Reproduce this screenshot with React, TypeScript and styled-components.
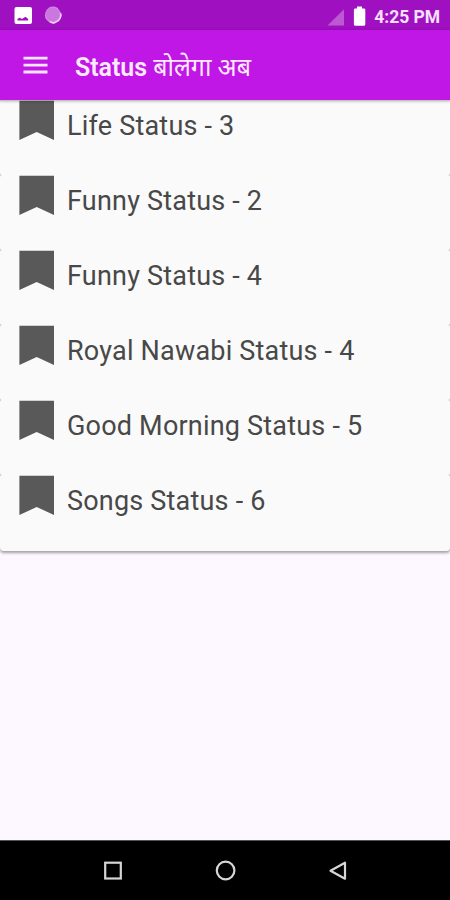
import React from 'react';
import styled, { createGlobalStyle } from 'styled-components';

const GlobalStyle = createGlobalStyle`
  html, body { margin: 0; padding: 0; }
  body { font-family: Roboto, 'Noto Sans', sans-serif; overflow: hidden; }
`;

const Screen = styled.div`
  width: 450px;
  height: 900px;
  display: flex;
  flex-direction: column;
  overflow: hidden;
  background: #fdf7ff;
`;

const StatusBar = styled.div`
  flex: none;
  height: 30px;
  box-sizing: border-box;
  padding: 1px 10px 0 14px;
  display: flex;
  align-items: center;
  justify-content: space-between;
  background: #9f10c0;
`;

const StatusIcons = styled.div`
  display: flex;
  align-items: center;
`;

const NoticeIcon = styled.svg`
  display: block;
  margin-right: 11px;
`;

const Clock = styled.span`
  margin-left: 8px;
  font-size: 17.5px;
  line-height: 30px;
  font-weight: 700;
  letter-spacing: -0.05px;
  color: #f9e0ff;
  padding-top: 2px;
`;

const Toolbar = styled.header`
  flex: none;
  height: 70px;
  box-sizing: border-box;
  padding-left: 23px;
  display: flex;
  align-items: center;
  background: #c016e6;
  box-shadow: 0 1px 3px rgba(0, 0, 0, 0.35);
  z-index: 1;
`;

const MenuButton = styled.button`
  width: 25px;
  height: 18px;
  margin: 0 27px 0 0;
  padding: 0;
  border: 0;
  background: none;
`;

const Title = styled.h1`
  margin: 0;
  padding-top: 5px;
  font-size: 25px;
  line-height: 32px;
  font-weight: 600;
  letter-spacing: -0.05px;
  color: #fdeaff;
  white-space: nowrap;
`;

const Hindi = styled.span`
  font-size: 25px;
  font-weight: 450;
  letter-spacing: 0;
`;

const Content = styled.main`
  flex: 1;
`;

const List = styled.ul`
  margin: 0;
  padding: 0;
  list-style: none;
  background: #c4c4c4;
  border-radius: 0 0 4px 4px;
  box-shadow: 0 2px 3px rgba(0, 0, 0, 0.36);
`;

const Row = styled.li`
  height: 75px;
  box-sizing: border-box;
  padding-left: 19px;
  display: flex;
  align-items: flex-start;
  background: #fafafa;
  border-radius: 2px;

  &:last-child {
    height: 76px;
    border-radius: 2px 2px 4px 4px;
  }
`;

const Bookmark = styled.svg`
  display: block;
  flex: none;
  margin-right: 12px;
`;

const Label = styled.span`
  font-size: 27px;
  line-height: 52px;
  font-weight: 400;
  letter-spacing: 0.2px;
  color: #484848;
  white-space: nowrap;
`;

const NavBar = styled.nav`
  flex: none;
  height: 60px;
  box-sizing: border-box;
  padding: 0 101px 0 102px;
  border-top: 1px solid #555;
  display: flex;
  align-items: center;
  justify-content: space-between;
  background: #000;
`;

const NavIcon = styled.svg`
  display: block;
  fill: none;
  stroke: #d6d6d6;
  stroke-width: 2.2;
`;

const items = [
  'Life Status - 3',
  'Funny Status - 2',
  'Funny Status - 4',
  'Royal Nawabi Status - 4',
  'Good Morning Status - 5',
  'Songs Status - 6',
];

export default function App() {
  return (
    <Screen>
      <GlobalStyle />
      <StatusBar>
        <StatusIcons>
          <NoticeIcon width="19" height="19" viewBox="0 0 19 19">
            <rect x="0.5" y="1" width="17.5" height="17" rx="2" fill="#fff" />
            <path d="M3.5 14.5 V12.8 L6 11.8 L8 13.1 L11.4 10.8 L14.2 13 V14.5 Z" fill="#9f10c0" />
          </NoticeIcon>
          <NoticeIcon width="19" height="19" viewBox="0 0 19 19">
            <path d="M5 1.5 Q9 -0.6 13.5 1.8 L17.4 7.5 Q18.6 11 15.2 15 L10 18 Q4.5 17.5 1.3 12 Q-0.2 6 5 1.5 Z" fill="#d18ae2" />
            <path d="M16.6 7.5 Q17.6 11 14.5 14.4 L10 16.9 Q8 17 6 15.6" fill="none" stroke="#f7ddfb" strokeWidth="1.2" />
            <circle cx="8.6" cy="8.3" r="6.8" fill="#cc76df" />
          </NoticeIcon>
        </StatusIcons>
        <StatusIcons>
          <svg width="39" height="22" viewBox="0 0 39 22">
            <path d="M0.5 20.5 L17 4.3 V20.5 Z" fill="#bd58d3" />
            <path d="M30 1.5 h5 v2 h2 q1.3 0 1.3 1.3 v14.4 q0 1.5 -1.5 1.5 h-8.4 q-1.5 0 -1.5 -1.5 V4.8 q0 -1.3 1.3 -1.3 h1.8 z" fill="#fff" />
          </svg>
          <Clock>4:25 PM</Clock>
        </StatusIcons>
      </StatusBar>
      <Toolbar>
        <MenuButton aria-label="Menu">
          <svg width="25" height="18" viewBox="0 0 25 18" display="block">
            <path d="M0.5 2.2 H24.5 M0.5 9.2 H24.5 M0.5 16 H24.5" stroke="#fae4ff" strokeWidth="2.8" />
          </svg>
        </MenuButton>
        <Title>
          Status <Hindi>बोलेगा अब</Hindi>
        </Title>
      </Toolbar>
      <Content>
        <List>
          {items.map((item) => (
            <Row key={item}>
              <Bookmark width="36" height="41" viewBox="0 0 36 41">
                <path d="M0.4 0.8 H35 V40 L17.7 32 L0.4 40 Z" fill="#595959" />
              </Bookmark>
              <Label>{item}</Label>
            </Row>
          ))}
        </List>
      </Content>
      <NavBar>
        <NavIcon width="22" height="22" viewBox="0 0 22 22">
          <rect x="3.2" y="2.7" width="15.6" height="15.8" />
        </NavIcon>
        <NavIcon width="22" height="22" viewBox="0 0 22 22">
          <circle cx="10.6" cy="10.5" r="8.8" />
        </NavIcon>
        <NavIcon width="22" height="22" viewBox="0 0 22 22">
          <path d="M3.5 10.7 L18 2.7 V18.7 Z" strokeLinejoin="round" />
        </NavIcon>
      </NavBar>
    </Screen>
  );
}
